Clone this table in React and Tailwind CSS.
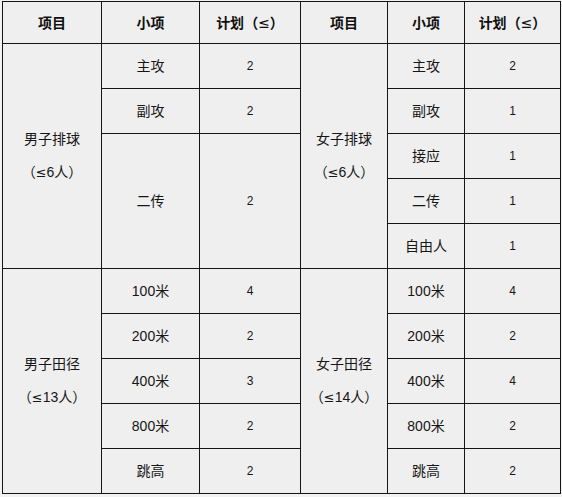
// Sports quota table – two sides (men / women), volleyball and athletics.

const cjk = '"Liberation Sans", "Noto Sans CJK SC", sans-serif';

const rows = [
  { l: { group: ['男子排球', '6人'], span: 5 }, li: '主攻', ln: 2, lspan: 1, r: { group: ['女子排球', '6人'], span: 5 }, ri: '主攻', rn: 2 },
  { li: '副攻', ln: 2, lspan: 1, ri: '副攻', rn: 1 },
  { li: '二传', ln: 2, lspan: 3, ri: '接应', rn: 1 },
  { ri: '二传', rn: 1 },
  { ri: '自由人', rn: 1 },
  { l: { group: ['男子田径', '13人'], span: 5 }, li: '100米', ln: 4, lspan: 1, r: { group: ['女子田径', '14人'], span: 5 }, ri: '100米', rn: 4 },
  { li: '200米', ln: 2, lspan: 1, ri: '200米', rn: 2 },
  { li: '400米', ln: 3, lspan: 1, ri: '400米', rn: 4 },
  { li: '800米', ln: 2, lspan: 1, ri: '800米', rn: 2 },
  { li: '跳高', ln: 2, lspan: 1, ri: '跳高', rn: 2 },
];

const cell = 'border border-[#151515] text-center align-middle p-0';
const fw = '"Noto Sans CJK SC", sans-serif';

function Limit({ text }) {
  return (
    <span>
      <span style={{ fontFamily: fw }}>（</span>
      <span className="text-[13px]" style={{ fontFamily: '"DejaVu Sans", sans-serif' }}>≤</span>
      {text}
      <span style={{ fontFamily: fw }}>）</span>
    </span>
  );
}

function Group({ lines }) {
  return (
    <div className="leading-[32px] text-[14px] text-[#161616]">
      <div>{lines[0]}</div>
      <div><Limit text={lines[1]} /></div>
    </div>
  );
}

function HeadPlan() {
  return (
    <span>
      计划<span style={{ fontFamily: fw }}>（</span>
      <span className="font-normal" style={{ fontFamily: '"DejaVu Sans", sans-serif' }}>≤</span>
      <span style={{ fontFamily: fw }}>）</span>
    </span>
  );
}

export default function App() {
  return (
    <div className="w-[562px] h-[497px] bg-[#f3f2f2] pt-[1px] pl-[2px]" style={{ fontFamily: cjk }}>
      <table className="table-fixed border-collapse w-[558px] bg-[#f0efef]">
        <colgroup>
          <col className="w-[99px]" />
          <col className="w-[98px]" />
          <col className="w-[101px]" />
          <col className="w-[87px]" />
          <col className="w-[77px]" />
          <col className="w-[96px]" />
        </colgroup>
        <thead>
          <tr className="h-[42px] text-[14px] font-bold text-[#101010]">
            <th className={cell}><div className="pt-[1px]">项目</div></th>
            <th className={cell}><div className="pt-[1px]">小项</div></th>
            <th className={cell}><div className="pt-[1px]"><HeadPlan /></div></th>
            <th className={cell}><div className="pt-[1px]">项目</div></th>
            <th className={cell}><div className="pt-[1px]">小项</div></th>
            <th className={cell}><div className="pt-[1px]"><HeadPlan /></div></th>
          </tr>
        </thead>
        <tbody>
          {rows.map((r, i) => (
            <tr key={i} className="h-[45px]">
              {r.l && <td rowSpan={r.l.span} className={cell}><Group lines={r.l.group} /></td>}
              {r.li && <td rowSpan={r.lspan} className={`${cell} text-[14px] text-[#161616]`}>{r.li}</td>}
              {r.li && <td rowSpan={r.lspan} className={`${cell} text-[12px] text-[#161616]`}>{r.ln}</td>}
              {r.r && <td rowSpan={r.r.span} className={cell}><Group lines={r.r.group} /></td>}
              <td className={`${cell} text-[14px] text-[#161616]`}>{r.ri}</td>
              <td className={`${cell} text-[12px] text-[#161616]`}>{r.rn}</td>
            </tr>
          ))}
        </tbody>
      </table>
    </div>
  );
}
